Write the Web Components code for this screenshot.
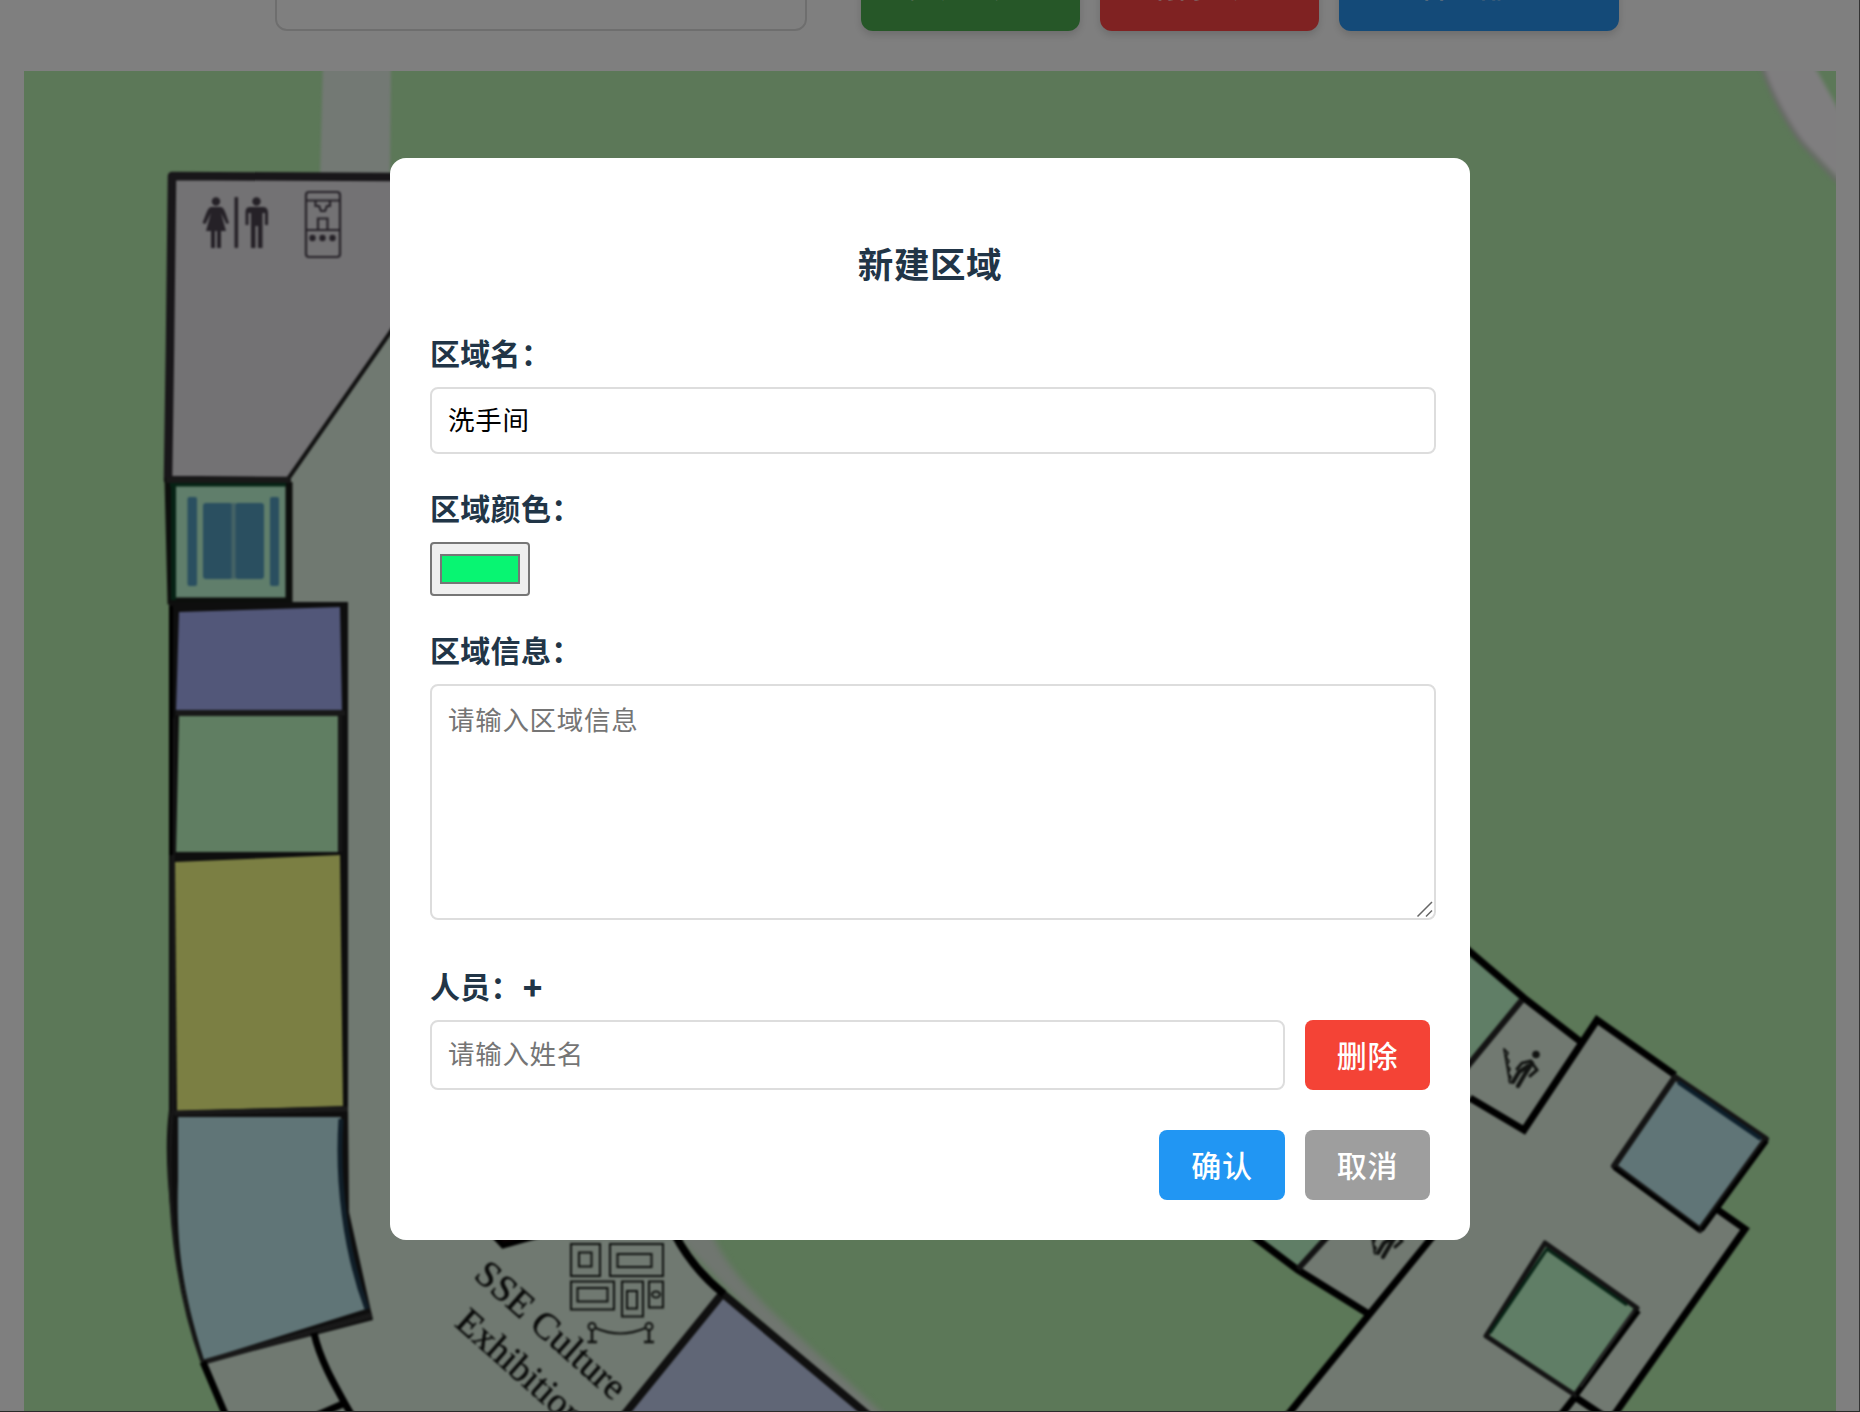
<!DOCTYPE html>
<html lang="zh-CN">
<head>
<meta charset="utf-8">
<title>新建区域</title>
<style>
html,body{margin:0;height:100%}
body{background:#fff;overflow:hidden;font-family:"Liberation Sans","Noto Sans CJK SC",sans-serif;color:#213547}
</style>
</head>
<body>
<region-page></region-page>
<script>
const define = (name, html) => {
  const t = document.createElement('template');
  t.innerHTML = html;
  customElements.define(name, class extends HTMLElement {
    constructor() {
      super();
      this.attachShadow({ mode: 'open' }).append(t.content.cloneNode(true));
    }
  });
};

define('ui-button', `
<style>
:host{display:flex;box-sizing:border-box;flex:none}
button{all:unset;box-sizing:border-box;flex:1;display:flex;align-items:center;justify-content:center;
 height:var(--h,70px);background:var(--bg);color:#fff;border-radius:var(--r,8px);padding-bottom:3px;
 font:500 30px/36px "Noto Sans CJK SC",sans-serif;letter-spacing:.7px;box-shadow:var(--shadow,none);white-space:nowrap}
</style><button><slot></slot></button>`);

define('tool-bar', `
<style>
:host{display:flex;height:31px;align-items:flex-end;padding-left:275px;flex:none}
input{box-sizing:border-box;width:532px;height:90px;border:2px solid #ddd;border-radius:12px;background:#fff;padding:0 28px;
 font:28px "Noto Sans CJK SC",sans-serif;margin:0;outline:none}
.b{display:flex;gap:20px;margin-left:54px}
ui-button{--h:91px;--r:12px;--shadow:0 4px 8px rgba(0,0,0,.15)}
</style>
<input type="text">
<div class="b">
<ui-button style="--bg:#4caf50;width:219px">完成绘制</ui-button>
<ui-button style="--bg:#ff4444;width:219px">清除绘制</ui-button>
<ui-button style="--bg:#2894f0;width:280px">查看全部区域</ui-button>
</div>`);

define('floor-map', `
<style>
:host{display:block;width:1812px;height:1341px;flex:none}
svg{display:block}
text{font-family:"Liberation Serif",serif;font-size:37.5px;fill:#101210;stroke:#101210;stroke-width:.4px}
</style>
<svg width="1812" height="1341" viewBox="24 71 1812 1341">
<rect x="24" y="71" width="1812" height="1341" fill="#b8f0b0"/>
<path d="M323 60H391L390 180H320Z" fill="#e6f2e8" style="filter:blur(1.500px)"/>
<g style="filter:blur(2px)">
 <path d="M1760 60C1770 90 1790 130 1804 142L1840 180V112L1811 60Z" fill="#fffcff"/>
 <path d="M1762 66C1771 94 1789 126 1803 144L1838 182" fill="none" stroke="#d2d4d0" stroke-width="4"/>
</g>
<path d="M670 1230H710C735 1288 790 1325 886 1417H850Z" fill="#e0ece0" style="filter:blur(3px)"/>
<g style="filter:blur(.9px)">
 <!-- building ground -->
 <path d="M172 176H420V1236H680C705 1275 725 1290 735 1300L870 1420H226C190 1340 168 1260 171 1110Z" fill="#e0f2e2"/>
 <path d="M1460 944L1524 998L1581 1042L1597 1020L1765 1135L1718 1209L1746 1229L1616 1412H1289L1367 1313L1255 1240L1250 1000Z" fill="#e2f2e2"/>
 <!-- rest room -->
 <path d="M172 176H394V328L288 480H168Z" fill="#e6e4e8"/>
 <path d="M394 327L288 479" fill="none" stroke="#262626" stroke-width="4"/>
 <path d="M394 177L172 176L170 345L168 480L289 481" fill="none" stroke="#302c32" stroke-width="8.5" stroke-linejoin="round"/>
 <!-- table tennis room -->
 <path d="M172 484H286V601H172Z" fill="#c0fcd6"/>
 <path d="M168 478L171 601H289V482" fill="none" stroke="#181c18" stroke-width="7"/>
 <path d="M170 484H286M173.500 484V600" fill="none" stroke="#0c4428" stroke-width="5"/>
 <path d="M166 480H291" stroke="#303030" stroke-width="6"/>
 <g fill="#549ec0"><rect x="187.500" y="497" width="9.500" height="89" rx="2"/><rect x="203" y="503" width="29.500" height="76" rx="3"/><rect x="235" y="503" width="29" height="76" rx="3"/><rect x="231.500" y="503" width="4" height="76" fill="#8cc8cc"/><rect x="270" y="497" width="9" height="89" rx="2"/></g>
 <!-- left wing -->
 <path d="M169 602H348V1110L349 1212L373 1320L202 1364C180 1290 160 1180 169 1110Z" fill="#1c1c1c"/>
 <path d="M179 612L340 607L342 710H176Z" fill="#a4aef2"/>
 <path d="M179 716H338V852H176Z" fill="#c0fcc4"/>
 <path d="M175 862L340 855L343 1106L177 1111Z" fill="#f6ff86"/>
 <path d="M178 1117H341C337 1180 343 1240 366 1309L204 1360C182 1290 176 1245 178 1180Z" fill="#c0eaee"/>
 <path d="M341 1119C337 1180 345 1250 367 1309" fill="none" stroke="#203c50" stroke-width="5"/>
 <path d="M340.500 716V852M173 718V1112M172 1112C165 1200 176 1290 202 1362" fill="none" stroke="#303030" stroke-width="3"/>
 <path d="M171 606V855" stroke="#000" stroke-width="4"/>
 <path d="M174 1113L348 1109M176 713H345M204 1362L372 1315" stroke="#323232" stroke-width="5"/>
 <g fill="none" stroke="#000" stroke-width="7">
  <path d="M203 1362L226 1416M314 1333C320 1360 334 1384 352 1416M318 1415L345 1403"/>
 </g>
 <!-- exhibition hall -->
 <path d="M490 1232L503 1246L545 1234" fill="#140608" stroke="#000" stroke-width="5"/>
 <path d="M723 1296L628 1414H866Z" fill="#c0ccec"/>
 <path d="M722 1294L624 1415M722 1293L868 1415" stroke="#202020" stroke-width="8" fill="none"/>
 <path d="M674 1233C687 1258 704 1278 724 1294" stroke="#000" stroke-width="8" fill="none"/>
 <g fill="none" stroke="#1e221e" stroke-width="2">
  <rect x="571" y="1244" width="29" height="32"/><rect x="579" y="1252.500" width="12.500" height="14"/>
  <rect x="610" y="1244" width="53" height="32"/><rect x="617.500" y="1254" width="34" height="13"/>
  <rect x="571" y="1281.500" width="43" height="28"/><rect x="577.500" y="1288" width="30" height="13.500"/>
  <rect x="622" y="1281.500" width="21" height="35"/><rect x="627" y="1291" width="10" height="17.500"/>
  <rect x="649" y="1281.500" width="14" height="26"/><ellipse cx="656" cy="1294.500" rx="4" ry="3"/>
  <circle cx="592" cy="1326.500" r="3.500"/><circle cx="649" cy="1326.500" r="3.500"/>
  <path d="M595.500 1328Q620 1339 645.500 1328"/>
  <path d="M592 1330V1341M587.500 1342H597M649 1330V1341M644 1342H654" stroke-width="2.500"/>
 </g>
 <text transform="translate(472.500 1277) rotate(41.500)" textLength="188">SSE Culture</text>
 <text transform="translate(453.500 1325) rotate(41.500)">Exhibition</text>
 <!-- right wing -->
 <path d="M1460 944L1522 998L1470 1063Z" fill="#c0fccc"/>
 <path d="M1255 1238L1298 1268L1328 1238Z" fill="#c0fccc"/>
 <path d="M1675 1078L1766 1139L1701 1230L1614 1166Z" fill="#c0eaee"/>
 <path d="M1545 1243L1638 1308L1575 1397L1485 1337Z" fill="#c0fccc"/>
 <g fill="none" stroke="#000" stroke-width="7" stroke-linejoin="miter">
  <path d="M1462 945L1524 998L1581 1042M1470 1098L1524 1130L1597 1020L1675 1075M1250 1234L1298 1270L1367 1313M1433 1236L1286 1417M1718 1210L1745 1229L1612 1418M1575 1397L1602 1415M1575 1397L1561 1415"/>
 </g>
 <g fill="none" stroke="#282828" stroke-width="6" stroke-linejoin="round">
  <path d="M1522 1000L1466 1068M1298 1269L1328 1236"/>
  <path d="M1675 1077L1766 1139L1700 1230L1614 1166Z"/>
  <path d="M1545 1243L1637 1308L1575 1395L1486 1336Z" stroke-width="5"/>
 </g>
 <path d="M1678 1082L1761 1139" stroke="#183c54" stroke-width="4"/>
 <path d="M1490 1333L1547 1249L1627 1305" fill="none" stroke="#0c4428" stroke-width="3"/>
 <path d="M1767 1141L1702 1230M1614 1168L1699 1230M1639 1311L1577 1395" stroke="#000" stroke-width="4"/>
 <path d="M1633 1311L1581 1387" stroke="#888" stroke-width="1"/>
 <g fill="none" stroke="#242824" stroke-linecap="round">
  <path d="M1504 1049L1510 1083M1504 1049L1508 1053L1506 1057L1509 1061L1507 1065L1510 1069L1508 1073L1511 1077L1509 1081" stroke-width="1.800"/>
  <circle cx="1536" cy="1054.500" r="2.800" fill="#242824" stroke-width="2"/>
  <path d="M1532 1063L1525 1074L1518 1086M1528 1066L1519 1072L1513 1082" stroke-width="4.200"/>
  <path d="M1531 1061L1522 1063L1517 1069M1532 1063L1537 1070L1530 1076" stroke-width="3"/>
 </g>
 <g transform="translate(-135 171)" fill="none" stroke="#242824" stroke-linecap="round">
  <path d="M1504 1049L1510 1083M1504 1049L1508 1053L1506 1057L1509 1061L1507 1065L1510 1069L1508 1073L1511 1077L1509 1081" stroke-width="1.800"/>
  <path d="M1532 1063L1525 1074L1518 1086M1528 1066L1519 1072L1513 1082" stroke-width="4.200"/>
  <path d="M1532 1063L1537 1070L1530 1076" stroke-width="3"/>
 </g>
 <!-- woman, divider, man, water dispenser -->
 <g fill="#4a424e">
  <circle cx="216" cy="201.500" r="4.200"/>
  <path d="M211 207H221C225 208 226 215 229 223L226.500 224L221 213L226 231H221V248H217V231H215V248H211V231H206L211 213L205.500 224L202.500 223C206 215 207 208 211 207Z"/>
  <rect x="234.500" y="197" width="3.600" height="51" rx="1"/>
  <circle cx="256.500" cy="201.500" r="4.200"/>
  <path d="M250 207H263C267 207 268 210 268 213V225H265V213H262.500V248H258V226H255.500V248H251V213H248.500V225H245.500V213C245.500 210 246 207 250 207Z"/>
 </g>
 <g fill="none" stroke="#4a424e" stroke-width="2.200">
  <rect x="306" y="192" width="34" height="65" rx="3"/><path d="M306 200.500H340M306 230H340M315.500 201V206H319L321 211H325L327 206H330V201M318 230V218.500H327.500V230"/>
 </g>
 <g fill="#4a424e"><circle cx="312.500" cy="238" r="3.200"/><circle cx="322.500" cy="238" r="3.200"/><circle cx="332.500" cy="238" r="3.200"/></g>
</g>
</svg>`);

define('form-field', `
<style>
:host{display:flex;flex-direction:column;align-items:flex-start}
.l{height:36px;font:700 30px/36px "Noto Sans CJK SC",sans-serif;color:#213547;letter-spacing:.3px;white-space:pre;margin-bottom:17px}
.c{display:flex;width:100%}
</style><div class="l"><slot name="label"></slot></div><div class="c"><slot></slot></div>`);

const box = `box-sizing:border-box;margin:0;border:2px solid #ddd;border-radius:8px;background:#fff;color:#000;outline:none;
 font:26.500px/32px "Noto Sans CJK SC",sans-serif;letter-spacing:.7px;`;
define('region-dialog', `
<style>
:host{display:flex;flex-direction:column;box-sizing:border-box;width:1080px;height:1082px;background:#fff;border-radius:16px;padding:82px 40px 0}
h2{margin:0;text-align:center;font:700 35.500px/46px "Noto Sans CJK SC",sans-serif;letter-spacing:.6px;color:#213547}
input[type=text]{${box}padding:0 16px 4px;width:1006px;height:67px;flex:none}
textarea{${box}padding:17px 16px;width:1006px;height:236px;resize:none;display:block}
input::placeholder,textarea::placeholder{color:#757575;opacity:1}
input[type=color]{box-sizing:border-box;appearance:none;width:100px;height:54px;border:2px solid #767676;border-radius:4px;background:#efefef;padding:0;margin:0}
::-webkit-color-swatch-wrapper{padding:10px 8px}
::-webkit-color-swatch{border:2px solid #767676;border-radius:0}
.ta{position:relative}
.ta svg{position:absolute;right:2px;bottom:2px}
.row{display:flex;gap:20px}
.row input[type=text]{width:855px;height:70px;padding-bottom:5px}
ui-button{width:125px}
.plus{font-family:Inter,sans-serif;font-size:34px;line-height:30px;margin-left:0}
.foot{display:flex;gap:20px;justify-content:flex-end;margin-top:40px}
.foot ui-button:first-child{width:126px}
</style>
<h2>新建区域</h2>
<form-field style="margin-top:48px"><span slot="label">区域名：</span><input type="text" value="洗手间"></form-field>
<form-field style="margin-top:35px"><span slot="label">区域颜色：</span><input type="color" value="#08f572"></form-field>
<form-field style="margin-top:35px"><span slot="label">区域信息：</span>
 <div class="ta"><textarea placeholder="请输入区域信息"></textarea>
 <svg width="18" height="18" fill="none" stroke="#666" stroke-width="1.500"><path d="M1.500 16.500L16 2M10 16.500L16 10.500"/></svg></div></form-field>
<form-field style="margin-top:47px"><span slot="label">人员：<span class="plus">+</span></span>
 <div class="row"><input type="text" placeholder="请输入姓名"><ui-button style="--bg:#f44336">删除</ui-button></div></form-field>
<div class="foot"><ui-button style="--bg:#2196f3">确认</ui-button><ui-button style="--bg:#9e9e9e">取消</ui-button></div>`);

define('region-page', `
<style>
:host{display:flex;flex-direction:column;width:1860px;height:1412px;overflow:hidden;position:relative}
floor-map{margin:40px 24px 0}
.o{position:absolute;inset:0;display:flex;align-items:flex-start;justify-content:center;padding-top:158px;box-sizing:border-box;
 background:rgba(0,0,0,.5);border-right:1px solid #333;border-bottom:1px solid #2a2a2a;padding-left:1px}
</style>
<tool-bar></tool-bar>
<floor-map></floor-map>
<div class="o"><region-dialog></region-dialog></div>`);
</script>
</body>
</html>
